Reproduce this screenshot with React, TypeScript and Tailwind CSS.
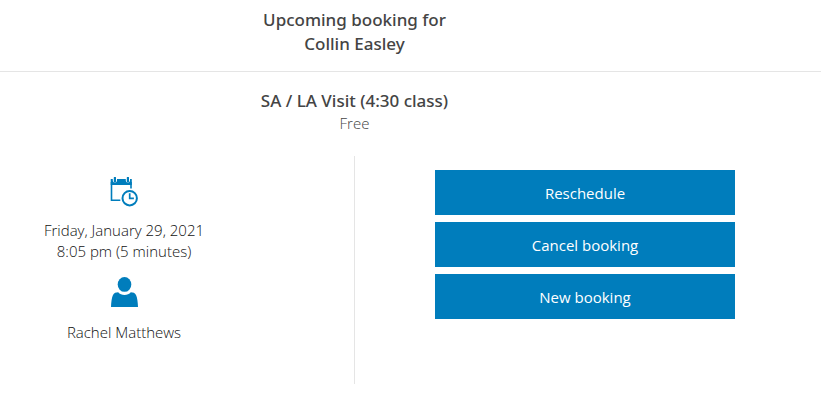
import React from "react";

function CalendarClockIcon() {
  return (
    <svg viewBox="0 0 28 30" className="h-[30px] w-7" aria-hidden="true">
      <path d="M1.500 5v18.200h8.800M21 5v6.600" fill="none" stroke="#007dbc" strokeWidth="1.600" />
      <path d="M.7 2h21.100v6H.7z" fill="#007dbc" />
      <path d="M4.900 0v3.600M17.900 0v3.600" stroke="#fff" strokeWidth="4.200" strokeLinecap="round" />
      <path d="M4.900 .8v3.800M17.900 .8v3.800" stroke="#007dbc" strokeWidth="2.200" strokeLinecap="round" />
      <circle cx="19.700" cy="21.200" r="7.200" fill="none" stroke="#007dbc" strokeWidth="2" />
      <path d="M19.700 16.300v5h4.200" fill="none" stroke="#007dbc" strokeWidth="1.700" />
    </svg>
  );
}

function PersonIcon() {
  return (
    <svg viewBox="0 0 28 30" className="h-[30px] w-7" fill="#007dbc" aria-hidden="true">
      <ellipse cx="14.500" cy="7.400" rx="6.800" ry="7.400" />
      <path d="M1 30c.2-5 .7-9.200 2-12 .9-2 3-2.700 5.200-2.700 1.500 2 3.700 2.700 6.300 2.700s4.800-.7 6.300-2.700c2.200 0 4.300.7 5.200 2.700 1.300 2.800 1.800 7 2 12z" />
    </svg>
  );
}

const actions = ["Reschedule", "Cancel booking", "New booking"];

export default function App() {
  return (
    <main className="bg-white pb-6 text-center font-['Open_Sans','Noto_Sans',sans-serif] text-[15px] font-light leading-[21px] text-[#111]">
      <header className="border-b border-[#e5e5e5] pt-2 pr-28 pb-[15px]">
        <h1 className="font-['Noto_Sans',sans-serif] text-[17px] font-medium leading-6 text-[#444]">
          Upcoming booking for
          <br />
          Collin Easley
        </h1>
      </header>

      <section className="pt-[17px] pr-28">
        <h2 className="font-['Noto_Sans',sans-serif] text-[17px] font-medium leading-6 text-[#444]">SA / LA Visit (4:30 class)</h2>
        <p className="text-[#444]">Free</p>
      </section>

      <div className="mt-[22px] grid min-h-[228px] grid-cols-[355fr_466fr]">
        <section className="flex flex-col items-center border-r border-[#e5e5e5] pt-[21px] pr-[106px]">
          <CalendarClockIcon />
          <p className="mt-[13px]">
            Friday, January 29, 2021
            <br />
            8:05 pm (5 minutes)
          </p>
          <div className="mt-[15px]">
            <PersonIcon />
          </div>
          <p className="mt-[15px]">Rachel Matthews</p>
        </section>

        <section className="flex flex-col items-center gap-[7px] pt-3.5 pr-1.5">
          {actions.map((label) => (
            <button
              key={label}
              type="button"
              className="h-[45px] w-[300px] cursor-pointer bg-[#007dbc] pt-0.5 font-normal text-white hover:bg-[#006ba1]"
            >
              {label}
            </button>
          ))}
        </section>
      </div>
    </main>
  );
}
